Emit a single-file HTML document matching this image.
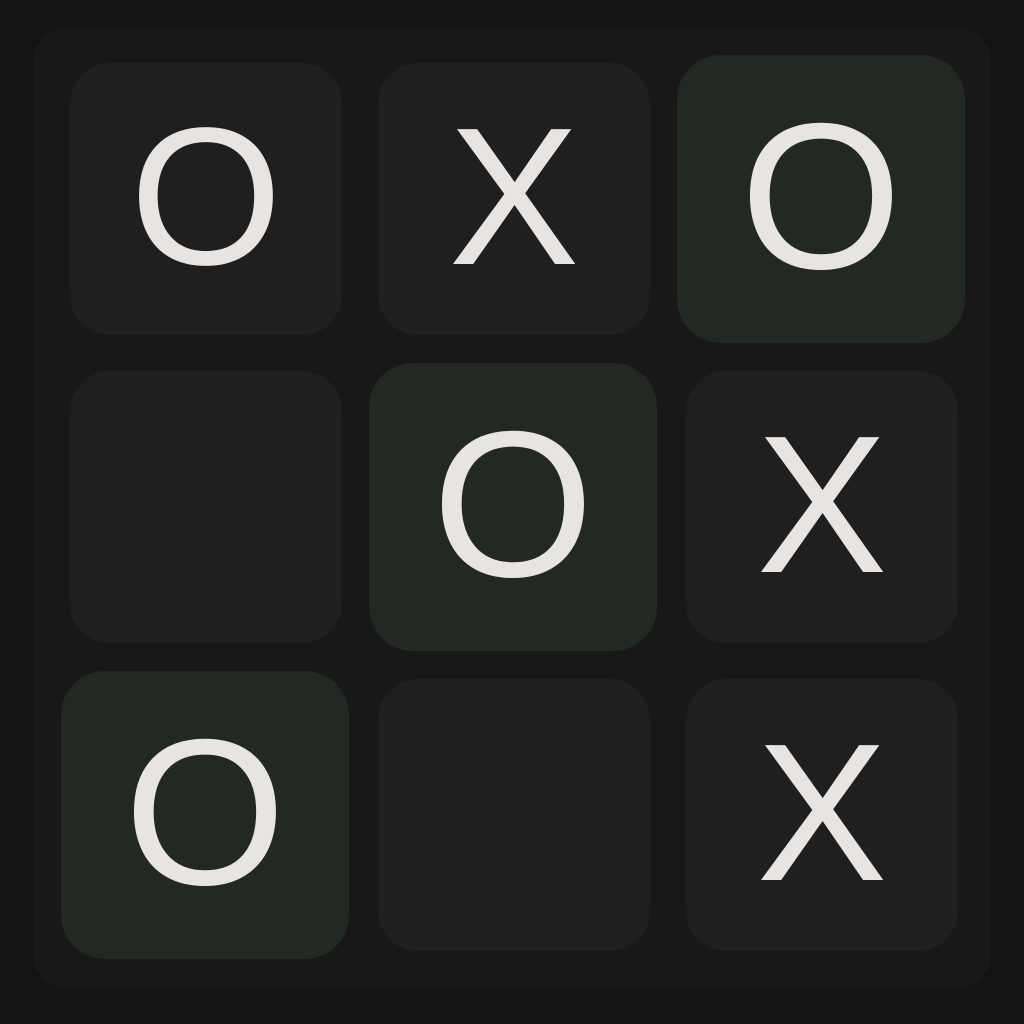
<!DOCTYPE html>
<html><head><style>
html,body{margin:0;padding:0;background:#131313;width:1024px;height:1024px;overflow:hidden}
.board{position:absolute;left:33px;top:28px;width:958px;height:960px;background:#181818;border-radius:34px}
.c{position:absolute;width:272px;height:272px;background:#1f1f1f;border-radius:40px;display:flex;align-items:center;justify-content:center;font-family:"Liberation Sans",sans-serif;font-size:196px;color:#e8e4e2;line-height:1}
.w{width:288px;height:288px;background:#222822;border-radius:44px;font-size:208px}
.c span{position:relative;top:-2px}
</style></head><body>
<div class="board"></div>
<div class="c" style="left:70px;top:63px"><span>O</span></div>
<div class="c" style="left:378px;top:63px"><span>X</span></div>
<div class="c w" style="left:677px;top:55px"><span>O</span></div>
<div class="c" style="left:70px;top:371px"></div>
<div class="c w" style="left:369px;top:363px"><span>O</span></div>
<div class="c" style="left:686px;top:371px"><span>X</span></div>
<div class="c w" style="left:61px;top:671px"><span>O</span></div>
<div class="c" style="left:378px;top:679px"></div>
<div class="c" style="left:686px;top:679px"><span>X</span></div>
</body></html>
